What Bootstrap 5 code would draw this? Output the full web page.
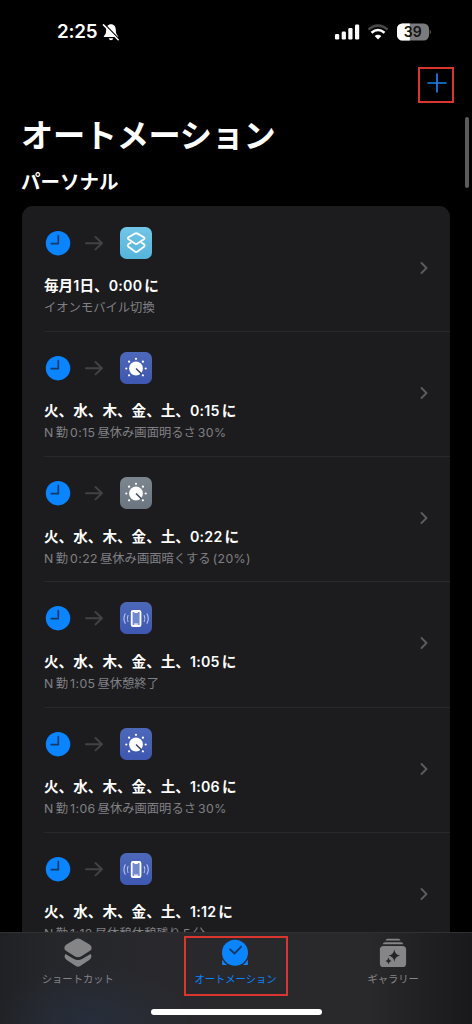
<!DOCTYPE html>
<html lang="ja" data-bs-theme="dark">
<head>
<meta charset="utf-8">
<meta name="viewport" content="width=device-width, initial-scale=1">
<title>オートメーション</title>
<link href="https://cdn.jsdelivr.net/npm/bootstrap@5.3.0/dist/css/bootstrap.min.css" rel="stylesheet">
<style>
body{background:#000;color:#fff;font-family:Inter,"Noto Sans CJK JP",sans-serif;height:1024px;overflow:hidden}
svg{display:block;flex:none}
.status{height:64px;padding:0 41px 0 57px}
.clock{font-size:18.8px;font-weight:600;line-height:22px;width:45px;letter-spacing:-.2px;white-space:nowrap}
.toolbar-row{height:39px;padding:3px 18px 0 0}
.marked{border:2px solid #d8362f}
.add{width:36px;height:36px}
.page-title{font-size:32.2px;line-height:40px;font-weight:700;margin:13px 0 0 21px;letter-spacing:-.3px}
.section-title{font-size:19.5px;line-height:26px;font-weight:700;margin:13px 0 0 21px}
.autos{background:#1c1c1e;margin:11px 22px 0;border-radius:11px 11px 0 0;height:727px;overflow:hidden}
.auto-row{height:125.25px;padding:20.5px 21px 0 22px}
.auto-row+.auto-row .rule{height:1px;background:#29292c;margin:-21px -21px 20px 0}
.auto-row .arrow{margin:0 16px 0 12px}
.auto-title{font-size:14.6px;line-height:22px;font-weight:700;margin-top:16.5px;white-space:nowrap}
.auto-title .num{font-weight:600;font-size:14.2px;letter-spacing:.25px;margin-right:2px}
.auto-sub{font-size:12.3px;line-height:21px;color:#808085;white-space:nowrap}
.auto-sub .num{margin:0 2px;letter-spacing:.4px}
.auto-sub .lead-letter{margin-right:2.5px}
.chevron{margin-top:2px}
.scroll-thumb{width:4px;height:71px;right:3px;top:117px;background:#5b5b5d;border-radius:2px}
.tabs{height:92px;bottom:0;left:0;right:0;border-top:1px solid #303032;background:linear-gradient(90deg,#202124 0,#25262a 10%,#29292d 35%,#29292b 78%,#19191b 100%)}
.tabs::before{content:"";position:absolute;inset:0;background:radial-gradient(ellipse 100px 60px at 90px 92px,#27344988,transparent)}
.tab-row{margin-left:-1px}
.tab-entry{width:33.333%;height:62px;padding-top:5px;font-size:10.3px;line-height:14px;color:#858588}
.tab-entry svg{margin-bottom:4px}
.tab-entry.now{color:#0a84ff}
.tab-frame{width:104px;height:60px;left:184px;top:3px}
.home-bar{width:171px;height:6px;border-radius:3px;background:#fff;left:151px;top:76px}
</style>
<script src="https://cdn.jsdelivr.net/npm/bootstrap@5.3.0/dist/js/bootstrap.bundle.min.js"></script>
</head>
<body class="position-relative m-0">
<svg width="0" height="0" class="position-absolute" aria-hidden="true">
  <defs>
    <linearGradient id="gBlue" x2="0" y2="1"><stop stop-color="#4d68b8"/><stop offset="1" stop-color="#3e58b2"/></linearGradient>
    <linearGradient id="gGray" x2="0" y2="1"><stop stop-color="#7b868f"/><stop offset="1" stop-color="#6b7580"/></linearGradient>
    <linearGradient id="gCyan" x2="0" y2="1"><stop stop-color="#72c6e8"/><stop offset="1" stop-color="#55b4db"/></linearGradient>
  </defs>
  <symbol id="time" viewBox="0 0 28 32"><circle cx="14" cy="16.2" r="12.2" fill="#0a84ff"/><path d="M14.3 8.700v8H7.300" fill="none" stroke="#143b68" stroke-width="1.700" stroke-linecap="round" stroke-linejoin="round"/></symbol>
  <symbol id="arrow" viewBox="0 0 20 32"><path d="M2 16.200h16M11.500 10l6.500 6.200-6.500 6.200" fill="none" stroke="#424245" stroke-width="2" stroke-linecap="round" stroke-linejoin="round"/></symbol>
  <symbol id="chev" viewBox="0 0 10 14"><path d="M2.500 2l5 5-5 5" fill="none" stroke="#5c5c60" stroke-width="1.900" stroke-linecap="round" stroke-linejoin="round"/></symbol>
  <symbol id="dial" viewBox="0 0 32 32"><circle cx="16" cy="16.500" r="6.900" fill="#fff"/><path d="M16 16.500l5.300 5.200" stroke="#3c4568" stroke-width="1.500"/><g fill="#fff"><circle cx="16" cy="6.800" r="1.100"/><circle cx="22.900" cy="9.700" r="1.100"/><circle cx="25.700" cy="16.500" r="1.100"/><circle cx="22.900" cy="23.300" r="1.100"/><circle cx="9.100" cy="23.300" r="1.100"/><circle cx="6.300" cy="16.500" r="1.100"/><circle cx="9.100" cy="9.700" r="1.100"/></g></symbol>
  <symbol id="phone" viewBox="0 0 32 32"><rect x="11.700" y="9" width="8.800" height="15" rx="1.300" fill="#7189ce" stroke="#fff" stroke-width="1.800"/><path d="M14.300 10.300h3.600M14 22.200h4.200" stroke="#fff" stroke-width="1.200"/><path d="M8 13.500q-1.500 3 0 6M5.200 11.700q-2.500 4.800 0 9.600M24.200 13.500q1.500 3 0 6M27 11.700q2.500 4.800 0 9.600" fill="none" stroke="#b9c5ee" stroke-width="1.100" stroke-linecap="round"/></symbol>
  <symbol id="layers" viewBox="0 0 32 32"><g fill="none" stroke="#fff" stroke-width="1.800" stroke-linejoin="round"><path d="M14.900 6.600q1.300-.7 2.600 0l6.400 3.700q1.300.9 0 1.900l-6.400 4.200q-1.300.8-2.600 0l-6.400-4.200q-1.300-1 0-1.900z"/><path d="M11.300 15.400l-2.800 1.700q-1.600 1.400 0 2.700l6.400 4.700q1.300.9 2.600 0l6.400-4.700q1.600-1.300 0-2.700l-2.800-1.700"/></g></symbol>
</svg>

<header class="status d-flex align-items-center">
  <div class="clock">2:25</div>
  <svg width="18" height="20" viewBox="0 0 18 20"><path d="M9 2.300c-3.100 0-4.700 2.300-4.800 5.200-.1 4-.8 5-2.200 6.400-.5.7-.2 1.200.5 1.200h13c.7 0 1-.5.5-1.200-1.400-1.400-2.100-2.400-2.200-6.400C13.700 4.600 12.100 2.300 9 2.300zM6.700 16.200h4.600c-.3 1.300-1.200 2-2.300 2s-2-.7-2.300-2z" fill="#fff"/><path d="M2.700 2.300l14 14.500" stroke="#000" stroke-width="1.300"/><path d="M1.500 2.900l14.700 14.800" stroke="#fff" stroke-width="1.500" stroke-linecap="round"/></svg>
  <svg class="ms-auto" width="25" height="18" viewBox="0 0 25 18" fill="#fff"><rect y="11" width="4.200" height="5.500" rx="1.200"/><rect x="6.700" y="8.500" width="4.200" height="8" rx="1.200"/><rect x="13.300" y="5" width="4.200" height="11.500" rx="1.200"/><rect x="20" y="1.500" width="4.200" height="15" rx="1.200"/></svg>
  <svg style="margin-left:7px" width="22" height="18" viewBox="0 0 22 18" fill="none" stroke-width="2.300"><path d="M1.400 6.500Q11-1.500 20.600 6.500" stroke="#48484a"/><path d="M4.500 9.800Q11 4.200 17.500 9.800" stroke="#fff" stroke-width="2.600"/><path d="M11 16.600l-3.400-3.500q3.400-2.700 6.800 0z" fill="#fff"/></svg>
  <svg style="margin-left:8px" width="34" height="18" viewBox="0 0 34 18"><defs><clipPath id="batt"><rect width="32" height="17" y=".5" rx="5.300"/></clipPath></defs><g clip-path="url(#batt)"><path fill="#7b7b7e" d="M0 0h32v18H0z"/><path fill="#fff" d="M0 0h12.800v18H0z"/></g><path d="M32.800 6.500q1.700 2.400 0 5z" fill="#8c8c8e"/><text x="15.800" y="14.100" text-anchor="middle" font-family="Inter" font-size="14" font-weight="600" fill="#111">39</text></svg>
</header>

<div class="toolbar-row d-flex justify-content-end">
  <div class="add marked d-flex align-items-center justify-content-center"><svg width="20" height="20" viewBox="0 0 20 20" style="margin:-4px 0 0 2px"><path d="M10 .5v19M.5 10h19" stroke="#1b82ee" stroke-width="1.700"/></svg></div>
</div>

<h1 class="page-title mb-0">オートメーション</h1>
<h2 class="section-title mb-0">パーソナル</h2>

<main class="autos">
  <section class="auto-row">
    <div class="d-flex align-items-center"><svg width="28" height="32"><use href="#time"/></svg><svg class="arrow" width="20" height="32"><use href="#arrow"/></svg><svg width="32" height="32"><rect width="32" height="32" rx="6.500" fill="url(#gCyan)"/><use href="#layers"/></svg></div>
    <div class="d-flex justify-content-between"><div><div class="auto-title">毎月<span class="num me-0">1</span>日、<span class="num">0:00</span>に</div><div class="auto-sub">イオンモバイル切換</div></div><svg width="10" height="14" class="chevron"><use href="#chev"/></svg></div>
  </section>
  <section class="auto-row"><div class="rule"></div>
    <div class="d-flex align-items-center"><svg width="28" height="32"><use href="#time"/></svg><svg class="arrow" width="20" height="32"><use href="#arrow"/></svg><svg width="32" height="32"><rect width="32" height="32" rx="6.500" fill="url(#gBlue)"/><use href="#dial"/></svg></div>
    <div class="d-flex justify-content-between"><div><div class="auto-title">火、水、木、金、土、<span class="num">0:15</span>に</div><div class="auto-sub"><span class="lead-letter">N</span>勤<span class="num">0:15</span>昼休み画面明るさ<span class="num">30%</span></div></div><svg width="10" height="14" class="chevron"><use href="#chev"/></svg></div>
  </section>
  <section class="auto-row"><div class="rule"></div>
    <div class="d-flex align-items-center"><svg width="28" height="32"><use href="#time"/></svg><svg class="arrow" width="20" height="32"><use href="#arrow"/></svg><svg width="32" height="32"><rect width="32" height="32" rx="6.500" fill="url(#gGray)"/><use href="#dial"/></svg></div>
    <div class="d-flex justify-content-between"><div><div class="auto-title">火、水、木、金、土、<span class="num">0:22</span>に</div><div class="auto-sub"><span class="lead-letter">N</span>勤<span class="num">0:22</span>昼休み画面暗くする<span class="num">(20%)</span></div></div><svg width="10" height="14" class="chevron"><use href="#chev"/></svg></div>
  </section>
  <section class="auto-row"><div class="rule"></div>
    <div class="d-flex align-items-center"><svg width="28" height="32"><use href="#time"/></svg><svg class="arrow" width="20" height="32"><use href="#arrow"/></svg><svg width="32" height="32"><rect width="32" height="32" rx="6.500" fill="url(#gBlue)"/><use href="#phone"/></svg></div>
    <div class="d-flex justify-content-between"><div><div class="auto-title">火、水、木、金、土、<span class="num">1:05</span>に</div><div class="auto-sub"><span class="lead-letter">N</span>勤<span class="num">1:05</span>昼休憩終了</div></div><svg width="10" height="14" class="chevron"><use href="#chev"/></svg></div>
  </section>
  <section class="auto-row"><div class="rule"></div>
    <div class="d-flex align-items-center"><svg width="28" height="32"><use href="#time"/></svg><svg class="arrow" width="20" height="32"><use href="#arrow"/></svg><svg width="32" height="32"><rect width="32" height="32" rx="6.500" fill="url(#gBlue)"/><use href="#dial"/></svg></div>
    <div class="d-flex justify-content-between"><div><div class="auto-title">火、水、木、金、土、<span class="num">1:06</span>に</div><div class="auto-sub"><span class="lead-letter">N</span>勤<span class="num">1:06</span>昼休み画面明るさ<span class="num">30%</span></div></div><svg width="10" height="14" class="chevron"><use href="#chev"/></svg></div>
  </section>
  <section class="auto-row"><div class="rule"></div>
    <div class="d-flex align-items-center"><svg width="28" height="32"><use href="#time"/></svg><svg class="arrow" width="20" height="32"><use href="#arrow"/></svg><svg width="32" height="32"><rect width="32" height="32" rx="6.500" fill="url(#gBlue)"/><use href="#phone"/></svg></div>
    <div class="d-flex justify-content-between"><div><div class="auto-title">火、水、木、金、土、<span class="num">1:12</span>に</div><div class="auto-sub"><span class="lead-letter">N</span>勤<span class="num">1:12</span>昼休憩休憩残り<span class="num">5</span>分</div></div><svg width="10" height="14" class="chevron"><use href="#chev"/></svg></div>
  </section>
</main>
<div class="scroll-thumb position-absolute"></div>

<nav class="tabs position-absolute">
  <div class="tab-row d-flex position-relative">
    <div class="tab-entry d-flex flex-column align-items-center"><svg width="28" height="30" viewBox="0 0 28 30" fill="#858588"><path d="M11.800 1.100q2.200-1.200 4.400 0l9.400 5.500q2.300 1.600 2 3.800-.2 1.500-2 2.700l-8.600 5.300q-3 1.600-6 0l-8.600-5.300Q.6 12 .4 10.400q-.3-2.200 2-3.800z"/><path d="M1.500 16l8.500 5q4 2.200 8 0l8.500-5q2.300 3.300-.9 5.700l-9.400 6.400q-2.200 1.400-4.400 0l-9.400-6.400Q-.8 19.300 1.500 16z"/></svg>ショートカット</div>
    <div class="tab-entry now d-flex flex-column align-items-center"><svg width="28" height="30" viewBox="0 0 28 30"><path d="M1.300 21.500q2 3.600 5 5.600H1.800q-.8 0-.8-.8zM26.700 21.500q-2 3.600-5 5.600h4.500q.8 0 .8-.8z" fill="#0a84ff"/><circle cx="14" cy="14.800" r="13" fill="#0a84ff"/><path d="M9.200 11.500l4.300 4 6.500-6.700" fill="none" stroke="#143b68" stroke-width="1.900" stroke-linecap="round" stroke-linejoin="round"/></svg>オートメーション</div>
    <div class="tab-entry d-flex flex-column align-items-center"><svg width="28" height="30" viewBox="0 0 28 30" fill="#858588"><path d="M6.500 2.500Q7 .8 8.500.8h11q1.500 0 2 1.700zM3.700 6.200q.5-1.900 2.300-1.900h16q1.800 0 2.300 1.900z"/><rect x=".9" y="8" width="26.200" height="21" rx="3.600"/><path d="M15.300 11.500q.8 5.300 5.900 6.100-5.100.8-5.900 6.100-.8-5.300-5.900-6.100 5.100-.8 5.900-6.100zM9.500 19.500q.5 2.900 3 3.400-2.500.5-3 3.400-.5-2.900-3-3.400 2.500-.5 3-3.400z" fill="#242426"/></svg>ギャラリー</div>
  </div>
  <div class="tab-frame marked position-absolute"></div>
  <div class="home-bar position-absolute"></div>
</nav>
</body>
</html>
